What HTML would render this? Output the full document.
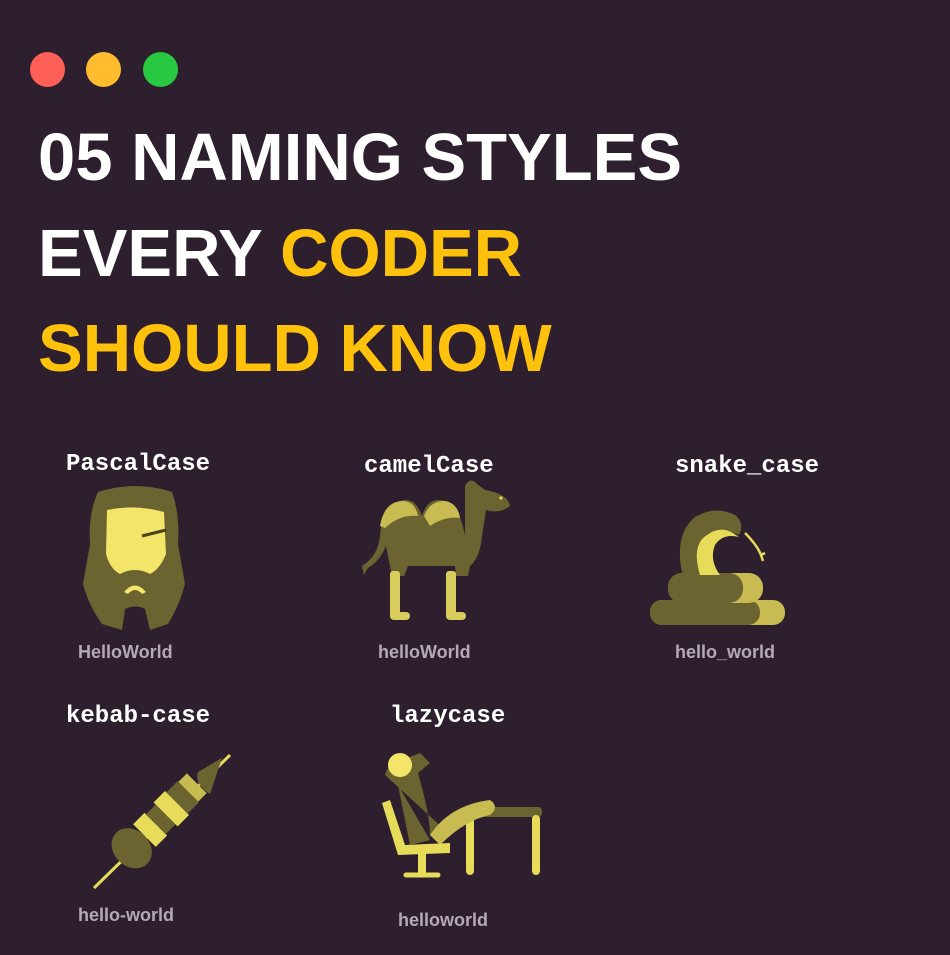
<!DOCTYPE html>
<html><head><meta charset="utf-8"><style>
body{margin:0;width:950px;height:955px;background:#2e1f2f;position:relative;overflow:hidden;font-family:"Liberation Sans",sans-serif}
.d{position:absolute;top:52px;width:35px;height:35px;border-radius:50%}
.t{position:absolute;left:38px;font-weight:bold;font-size:67px;color:#fff;line-height:1;white-space:nowrap}
.y{color:#fec20c}
.m{position:absolute;font-family:"Liberation Mono",monospace;font-size:24px;color:#fff;font-weight:bold;white-space:nowrap}
.c{position:absolute;font-size:18px;color:#b3aab3;font-weight:bold;white-space:nowrap}
svg{position:absolute}
</style></head><body>
<div class="d" style="left:30px;background:#fe5f57"></div>
<div class="d" style="left:86px;background:#febc2e"></div>
<div class="d" style="left:143px;background:#28c840"></div>
<div class="t" style="top:124px">05 NAMING STYLES</div>
<div class="t" style="top:220px">EVERY <span class="y">CODER</span></div>
<div class="t y" style="top:315px">SHOULD KNOW</div>

<div class="m" style="left:66px;top:451px">PascalCase</div>
<div class="m" style="left:364px;top:453px">camelCase</div>
<div class="m" style="left:675px;top:453px">snake_case</div>
<div class="m" style="left:66px;top:703px">kebab-case</div>
<div class="m" style="left:390px;top:703px">lazycase</div>

<div class="c" style="left:78px;top:642px">HelloWorld</div>
<div class="c" style="left:378px;top:642px">helloWorld</div>
<div class="c" style="left:675px;top:642px">hello_world</div>
<div class="c" style="left:78px;top:905px">hello-world</div>
<div class="c" style="left:398px;top:910px">helloworld</div>

<svg style="left:80px;top:484px" width="110" height="150" viewBox="0 0 110 150">
<path d="M18 8 Q55 -4 92 8 Q100 30 98 60 L105 100 Q100 120 88 140 L70 146 L65 125 Q55 120 45 125 L42 146 L22 140 Q8 120 3 100 L10 60 Q8 30 18 8Z" fill="#6b6330"/>
<path d="M27 26 Q55 20 84 28 L86 70 Q80 85 70 90 Q55 82 40 90 Q30 85 26 70Z" fill="#f3e56a"/>
<path d="M44 108 Q55 95 66 108 L62 110 Q55 102 48 110Z" fill="#f3e56a"/>
<path d="M62 52 L86 46" stroke="#4a4420" stroke-width="3"/>
</svg>

<svg style="left:360px;top:476px" width="155" height="150" viewBox="0 0 155 150">
<path d="M105 10 Q110 0 117 8 L125 14 Q148 18 150 30 Q140 38 126 34 L122 60 Q120 82 110 90 L108 100 L96 100 L95 90 L48 90 L44 100 L32 100 L26 70 Q20 85 8 92 Q4 98 4 100 L2 90 Q18 80 20 60 Q22 30 40 25 Q55 20 62 40 Q68 20 85 25 Q100 30 105 60Z" fill="#6b6330"/>
<path d="M20 50 Q24 26 42 25 Q55 25 58 40 Q40 38 25 52Z M64 40 Q70 24 86 25 Q98 28 100 42 Q85 40 70 50Z" fill="#c8bb52"/>
<rect x="30" y="95" width="10" height="48" rx="3" fill="#d8cc5c"/><rect x="30" y="136" width="20" height="8" rx="4" fill="#d8cc5c"/>
<rect x="86" y="95" width="10" height="48" rx="3" fill="#d8cc5c"/><rect x="86" y="136" width="20" height="8" rx="4" fill="#d8cc5c"/>
<circle cx="141" cy="22" r="1.6" fill="#e6dc5a"/>
</svg>

<svg style="left:645px;top:505px" width="145" height="125" viewBox="0 0 145 125">
<rect x="5" y="95" width="135" height="25" rx="12" fill="#c8bb52"/>
<rect x="5" y="95" width="110" height="25" rx="12" fill="#6b6330"/>
<rect x="23" y="68" width="95" height="30" rx="14" fill="#c8bb52"/>
<rect x="23" y="68" width="75" height="30" rx="14" fill="#6b6330"/>
<path d="M38 72 Q28 30 50 12 Q70 0 90 10 Q100 18 94 30 L84 26 Q70 20 58 35 Q52 50 62 72Z" fill="#6b6330"/>
<path d="M55 70 Q46 40 62 30 Q75 20 88 28 L94 32 Q78 28 70 40 Q64 55 75 70Z" fill="#e6dc5a"/>
<path d="M100 28 Q112 40 116 50 M116 50 L120 48 M116 50 L118 56" stroke="#e6dc5a" stroke-width="2.5" fill="none"/>
</svg>

<svg style="left:90px;top:750px" width="145" height="145" viewBox="0 0 145 145">
<line x1="4" y1="138" x2="140" y2="5" stroke="#e6dc5a" stroke-width="3"/>
<path d="M108 22 L132 8 L120 44 Q104 34 108 22Z" fill="#6b6330"/>
<g transform="rotate(-45 70 70)">
<ellipse cx="30" cy="70" rx="18" ry="22" fill="#6b6330"/>
<rect x="48" y="54" width="16" height="32" fill="#e6dc5a"/>
<rect x="64" y="56" width="14" height="28" fill="#6b6330"/>
<rect x="78" y="53" width="16" height="34" fill="#e6dc5a"/>
<rect x="94" y="55" width="16" height="30" fill="#6b6330"/>
<rect x="110" y="56" width="12" height="28" fill="#c8bb52"/>
</g>
</svg>

<svg style="left:370px;top:745px" width="175" height="140" viewBox="0 0 175 140">
<rect x="92" y="62" width="80" height="10" rx="4" fill="#6b6330"/>
<rect x="96" y="70" width="8" height="60" rx="4" fill="#e6dc5a"/>
<rect x="162" y="70" width="8" height="60" rx="4" fill="#e6dc5a"/>
<path d="M15 30 Q20 12 40 12 L50 8 L60 18 L48 28 Q60 70 60 90 L75 85 Z" fill="#6b6330"/>
<path d="M28 40 L60 95 L40 100Z" fill="#6b6330"/>
<path d="M60 90 Q80 60 120 55 Q130 62 120 70 Q95 75 70 100Z" fill="#c8bb52"/>
<path d="M20 55 L35 100 L80 98 L80 108 L28 110 L12 58Z" fill="#e6dc5a"/>
<rect x="48" y="108" width="8" height="22" fill="#e6dc5a"/>
<path d="M36 130 L68 130" stroke="#e6dc5a" stroke-width="5" stroke-linecap="round"/>
<circle cx="30" cy="20" r="12" fill="#f3e56a"/>
</svg>
</body></html>
